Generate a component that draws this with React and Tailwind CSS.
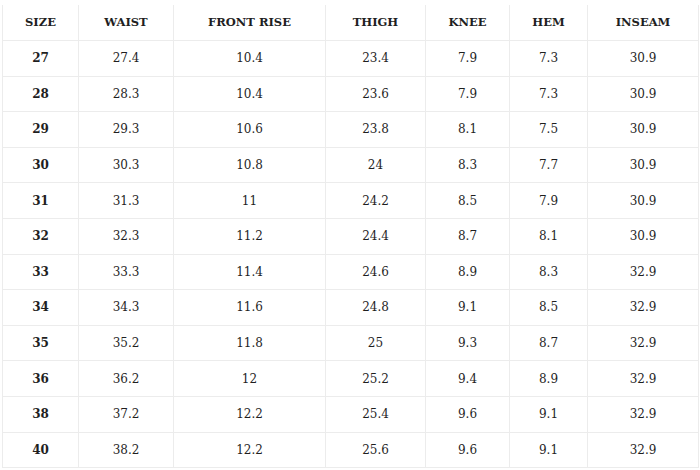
const headers = ['SIZE', 'WAIST', 'FRONT RISE', 'THIGH', 'KNEE', 'HEM', 'INSEAM']

const rows = [
  ['27', '27.4', '10.4', '23.4', '7.9', '7.3', '30.9'],
  ['28', '28.3', '10.4', '23.6', '7.9', '7.3', '30.9'],
  ['29', '29.3', '10.6', '23.8', '8.1', '7.5', '30.9'],
  ['30', '30.3', '10.8', '24', '8.3', '7.7', '30.9'],
  ['31', '31.3', '11', '24.2', '8.5', '7.9', '30.9'],
  ['32', '32.3', '11.2', '24.4', '8.7', '8.1', '30.9'],
  ['33', '33.3', '11.4', '24.6', '8.9', '8.3', '32.9'],
  ['34', '34.3', '11.6', '24.8', '9.1', '8.5', '32.9'],
  ['35', '35.2', '11.8', '25', '9.3', '8.7', '32.9'],
  ['36', '36.2', '12', '25.2', '9.4', '8.9', '32.9'],
  ['38', '37.2', '12.2', '25.4', '9.6', '9.1', '32.9'],
  ['40', '38.2', '12.2', '25.6', '9.6', '9.1', '32.9'],
]

export default function App() {
  return (
    <div className="w-[700px] h-[470px] bg-white pt-[5px] pl-[2px] font-['DejaVu_Serif',serif] text-[#1f1f1f]">
      <table className="table-fixed border-collapse w-[696px]">
        <colgroup>
          <col className="w-[76px]" />
          <col className="w-[95px]" />
          <col className="w-[152px]" />
          <col className="w-[100px]" />
          <col className="w-[84px]" />
          <col className="w-[78px]" />
          <col className="w-[111px]" />
        </colgroup>
        <thead>
          <tr className="h-[35.5px]">
            {headers.map(h => (
              <th key={h} className="border-x border-b border-[#ececec] text-[11.5px] font-bold text-center p-0">
                {h}
              </th>
            ))}
          </tr>
        </thead>
        <tbody>
          {rows.map(r => (
            <tr key={r[0]} className="h-[35.6px]">
              {r.map((v, i) => (
                <td key={i} className={`border border-[#ececec] text-[12px] text-center p-0 ${i === 0 ? 'font-bold' : ''}`}>
                  {v}
                </td>
              ))}
            </tr>
          ))}
        </tbody>
      </table>
    </div>
  )
}
